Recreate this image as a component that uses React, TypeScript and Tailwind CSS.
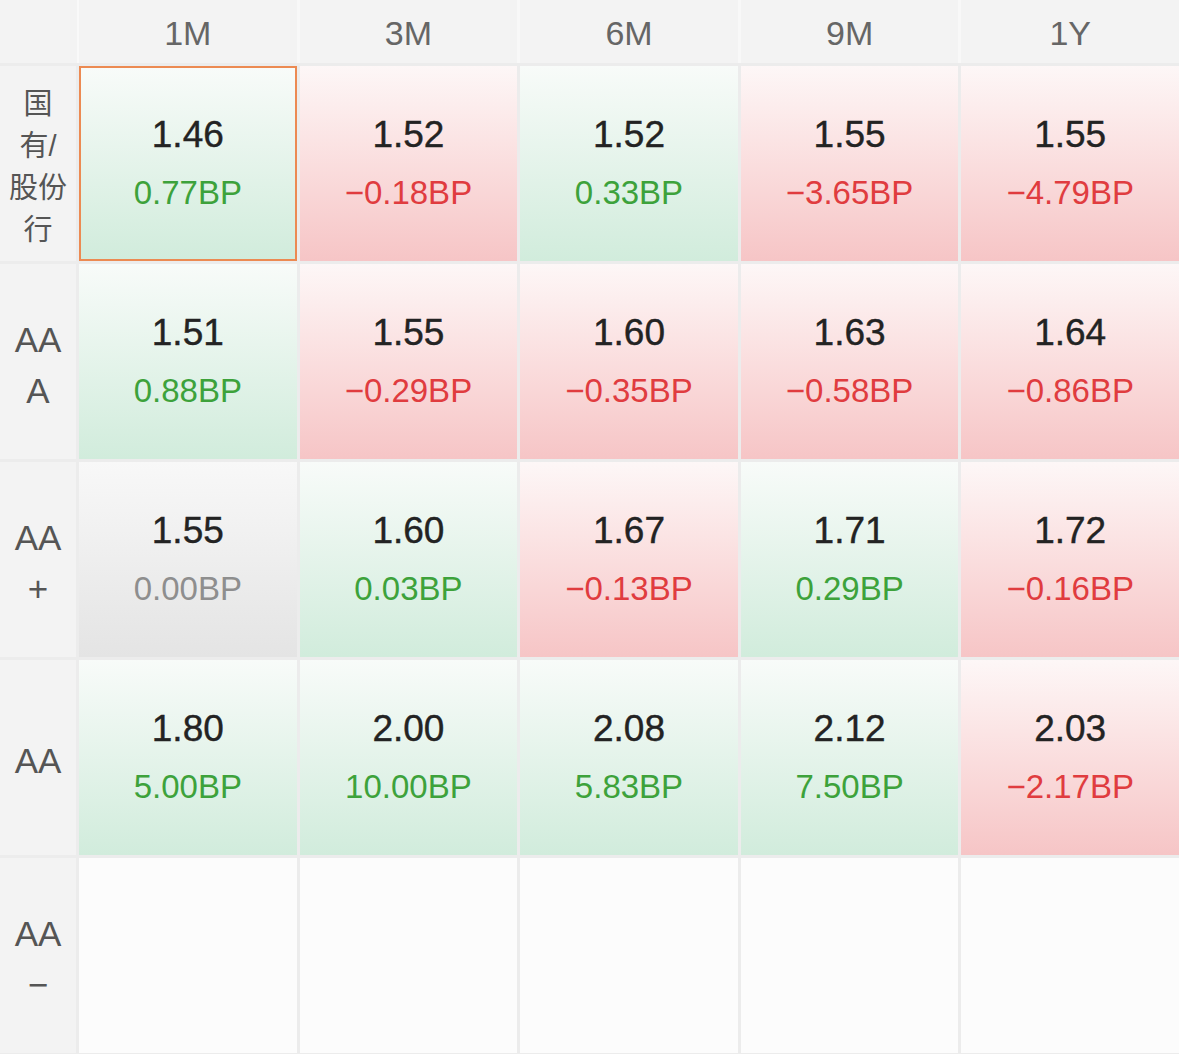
import React from "react";

type Cell = { rate: string; bp: string; dir: "up" | "down" | "flat" } | null;

const columns = ["1M", "3M", "6M", "9M", "1Y"];

const rows: { label: string[]; cjk?: boolean; cells: Cell[] }[] = [
  {
    label: ["国", "有/", "股份", "行"],
    cjk: true,
    cells: [
      { rate: "1.46", bp: "0.77BP", dir: "up" },
      { rate: "1.52", bp: "−0.18BP", dir: "down" },
      { rate: "1.52", bp: "0.33BP", dir: "up" },
      { rate: "1.55", bp: "−3.65BP", dir: "down" },
      { rate: "1.55", bp: "−4.79BP", dir: "down" },
    ],
  },
  {
    label: ["AA", "A"],
    cells: [
      { rate: "1.51", bp: "0.88BP", dir: "up" },
      { rate: "1.55", bp: "−0.29BP", dir: "down" },
      { rate: "1.60", bp: "−0.35BP", dir: "down" },
      { rate: "1.63", bp: "−0.58BP", dir: "down" },
      { rate: "1.64", bp: "−0.86BP", dir: "down" },
    ],
  },
  {
    label: ["AA", "+"],
    cells: [
      { rate: "1.55", bp: "0.00BP", dir: "flat" },
      { rate: "1.60", bp: "0.03BP", dir: "up" },
      { rate: "1.67", bp: "−0.13BP", dir: "down" },
      { rate: "1.71", bp: "0.29BP", dir: "up" },
      { rate: "1.72", bp: "−0.16BP", dir: "down" },
    ],
  },
  {
    label: ["AA"],
    cells: [
      { rate: "1.80", bp: "5.00BP", dir: "up" },
      { rate: "2.00", bp: "10.00BP", dir: "up" },
      { rate: "2.08", bp: "5.83BP", dir: "up" },
      { rate: "2.12", bp: "7.50BP", dir: "up" },
      { rate: "2.03", bp: "−2.17BP", dir: "down" },
    ],
  },
  {
    label: ["AA", "−"],
    cells: [null, null, null, null, null],
  },
];

function RateCell({ cell, selected }: { cell: Cell; selected?: boolean }) {
  if (!cell) return <div className="bg-[#fcfcfc]" />;
  const bg =
    cell.dir === "up"
      ? "bg-gradient-to-b from-[#f8fbf9] to-[#d1ecdc]"
      : cell.dir === "down"
      ? "bg-gradient-to-b from-[#fdf7f7] to-[#f6c5c6]"
      : "bg-gradient-to-b from-[#f8f8f8] to-[#e4e4e4]";
  const bpColor =
    cell.dir === "up" ? "text-[#3da23b]" : cell.dir === "down" ? "text-[#e03c3f]" : "text-[#8e8e8e]";
  return (
    <div
      className={`${bg} flex flex-col items-center justify-center ${
        selected ? "border-2 border-[#ec8a52]" : ""
      }`}
    >
      <span className="text-[37px] leading-[44px] text-[#232323] [-webkit-text-stroke:0.4px_#232323] -mt-[1px]">
        {cell.rate}
      </span>
      <span className={`text-[33px] leading-[40px] mt-[16px] ${bpColor}`}>{cell.bp}</span>
    </div>
  );
}

export default function App() {
  return (
    <div
      className="w-[1179px] h-[1054px] overflow-hidden bg-[#ececec] grid grid-cols-[76px_repeat(5,1fr)] grid-rows-[63px_repeat(5,195px)] gap-x-[3px] gap-y-[3px]"
      style={{ fontFamily: '"Liberation Sans", "Noto Sans CJK SC", sans-serif' }}
    >
      <div className="bg-[#f3f3f3] border-r-2 border-[#f9f9f9] -mr-[3px]" />
      {columns.map((c, i) => (
        <div
          key={c}
          className={`bg-[#f3f3f3] flex items-center justify-center pt-[3px] text-[34px] text-[#666] ${
            i < columns.length - 1 ? "border-r-[3px] border-[#f8f8f8] -mr-[3px]" : ""
          }`}
        >
          {c}
        </div>
      ))}
      {rows.map((row, ri) => (
        <React.Fragment key={ri}>
          <div className="bg-[#f3f3f3] flex flex-col items-center justify-center text-[#555] pt-[6px]">
            {row.label.map((l, i) =>
              row.cjk ? (
                <span key={i} className="text-[29px] leading-[42px]">
                  {l}
                </span>
              ) : (
                <span key={i} className="text-[35px] leading-[51px]">
                  {l}
                </span>
              )
            )}
          </div>
          {row.cells.map((cell, ci) => (
            <RateCell key={ci} cell={cell} selected={ri === 0 && ci === 0} />
          ))}
        </React.Fragment>
      ))}
    </div>
  );
}
